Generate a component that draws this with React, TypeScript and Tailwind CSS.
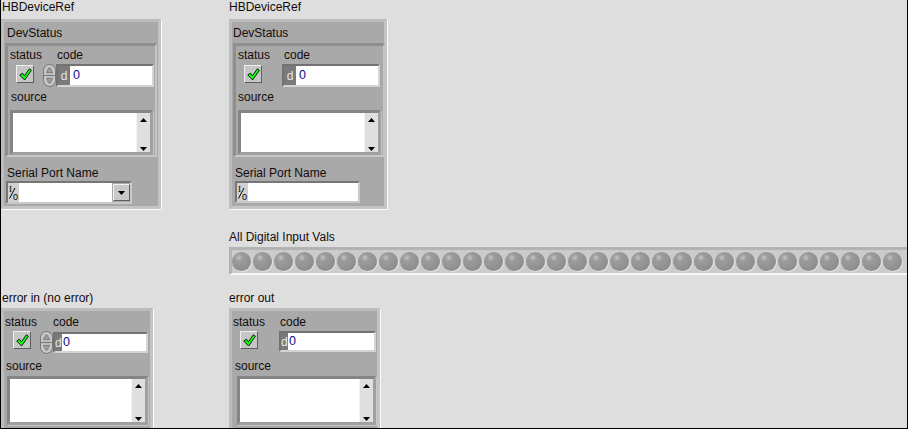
import React from 'react';

const font = "font-['Liberation_Sans',Arial,sans-serif]";

const outer =
  'bg-[#a9a9a9] border-[3px] border-t-[#bcbcbc] border-l-[#bcbcbc] border-r-[#c4c4c4] border-b-[#c4c4c4] shadow-[1px_1px_0_#fbfbfb]';
const inner =
  'bg-[#a9a9a9] border-t-[3px] border-l-[3px] border-r-2 border-b-2 border-t-[#8f8f8f] border-l-[#8f8f8f] border-r-[#c6c6c6] border-b-[#c6c6c6]';

const Label = ({ text, className = '' }: { text: string; className?: string }) => (
  <div className={`text-[12px] leading-[14px] text-[#140c0c] whitespace-nowrap ${className}`}>{text}</div>
);

const CheckButton = ({ className = '' }: { className?: string }) => (
  <div
    className={`w-[18px] h-[18px] bg-[#c6c6c6] border border-t-[#f0f0f0] border-l-[#f0f0f0] border-r-[#5f5f5f] border-b-[#5f5f5f] flex items-center justify-center ${className}`}
  >
    <svg width="13" height="13" viewBox="0 0 13 13">
      <path
        d="M0.8 7 L3.4 5.2 L5.4 7.8 L10.4 0.8 L12.4 2.3 L5.6 12 Z"
        fill="#11ff11"
        stroke="#062006"
        strokeWidth="1"
        strokeLinejoin="round"
      />
    </svg>
  </div>
);

// numeric increment/decrement pill
const Spinner = () => (
  <svg width="13" height="23" viewBox="0 0 13 23" className="shrink-0">
    <rect x="0.5" y="0.5" width="12" height="22" rx="6" fill="#bcbcbc" stroke="#767676" />
    <rect x="2" y="2" width="9" height="19" rx="4.5" fill="none" stroke="#d8d8d8" strokeWidth="0.8" />
    <line x1="1" y1="11.5" x2="12" y2="11.5" stroke="#7c7c7c" />
    <path d="M6.5 3.5 L9.5 8.5 L3.5 8.5 Z" fill="#a0a0a0" stroke="#6c6c6c" strokeWidth="0.7" />
    <path d="M6.5 19.5 L9.5 14.5 L3.5 14.5 Z" fill="#a0a0a0" stroke="#6c6c6c" strokeWidth="0.7" />
  </svg>
);

const Numeric = ({ className, wide }: { className: string; wide: boolean }) => (
  <div
    className={`flex border-2 border-t-[#727272] border-l-[#727272] border-r-[#d4d4d4] border-b-[#d4d4d4] ${className}`}
  >
    <div
      className={`bg-[#7a7a7a] text-[#e8e8e8] text-[12px] flex items-center overflow-hidden ${
        wide ? 'w-[12px] justify-center' : 'w-[7px] pl-[0px]'
      }`}
    >
      d
    </div>
    <div
      className={`flex-1 bg-white flex items-center text-[12.5px] text-[#0b0b8a] ${wide ? 'pl-[3px]' : 'pl-[1px]'}`}
    >
      0
    </div>
  </div>
);

const SourceBox = ({ className }: { className: string }) => (
  <div
    className={`flex bg-white border-[3px] border-t-[#858585] border-l-[#858585] border-r-[#a0a0a0] border-b-[#a0a0a0] shadow-[1px_1px_0_#c8c8c8] ${className}`}
  >
    <div className="flex-1" />
    <div className="w-[14px] bg-[#dfdfdf] border-l border-[#f4f4f4] flex flex-col justify-between items-center pt-[5px] pb-[1px]">
      <svg width="7" height="4" viewBox="0 0 7 4">
        <path d="M3.5 0 L7 4 L0 4 Z" fill="#000" />
      </svg>
      <svg width="7" height="4" viewBox="0 0 7 4">
        <path d="M0 0 L7 0 L3.5 4 Z" fill="#000" />
      </svg>
    </div>
  </div>
);

const IOIcon = () => (
  <svg width="11" height="17" viewBox="0 0 11 17" className="shrink-0">
    <text x="1" y="8" fontSize="9" fontFamily="Liberation Serif, serif" fill="#000">
      I
    </text>
    <line x1="1.5" y1="14.5" x2="7" y2="4" stroke="#000" strokeWidth="1" />
    <text x="5" y="16" fontSize="9" fontFamily="Liberation Sans, sans-serif" fill="#000">
      0
    </text>
  </svg>
);

type BodyProps = {
  rowPad: string;
  statusCol: string;
  statusPl: string;
  btn: string;
  codePl: string;
  spinner: boolean;
  numeric: string;
  wide: boolean;
  sourceLabel: string;
  sourceBox: string;
};

const Body = (p: BodyProps) => (
  <div>
    <div className={`flex ${p.rowPad}`}>
      <div className={p.statusCol}>
        <Label text="status" className={p.statusPl} />
        <CheckButton className={p.btn} />
      </div>
      <div>
        <Label text="code" className={p.codePl} />
        <div className="flex items-center mt-[2px]">
          {p.spinner && <Spinner />}
          <Numeric className={p.numeric} wide={p.wide} />
        </div>
      </div>
    </div>
    <Label text="source" className={p.sourceLabel} />
    <SourceBox className={p.sourceBox} />
  </div>
);

const LedArray = () => (
  <div className="h-[28px] bg-[#cbcbcb] border-t-[3px] border-l-[3px] border-b-2 border-t-[#b3b3b3] border-l-[#b3b3b3] border-b-[#f8f8f8] flex gap-[2px] pt-[2px] overflow-hidden">
    {Array.from({ length: 32 }).map((_, i) => (
      <div
        key={i}
        className="w-[19px] h-[19px] shrink-0 rounded-full bg-[radial-gradient(circle_at_36%_30%,#c4c4c4_0,#9c9c9c_20%,#929292_55%,#878787_100%)] shadow-[1px_1px_0_#e2e2e2]"
      />
    ))}
  </div>
);

export default function App() {
  return (
    <div
      className={`w-[908px] h-[429px] bg-[#dedede] border-l border-r border-b border-black overflow-hidden ${font}`}
    >
      {/* top row: device refs */}
      <div className="flex">
        <div className="w-[228px]">
          <Label text="HBDeviceRef" className="h-[19px] pl-[1px]" />
          <div className={`w-[160px] h-[190px] ${outer}`}>
            <Label text="DevStatus" className="pt-[4px] pl-[3px]" />
            <div className={`mt-[3px] ml-[1px] w-[152px] h-[114px] ${inner}`}>
              <Body
                rowPad="pt-[2px]"
                statusCol="w-[35px]"
                statusPl="pl-[2px]"
                btn="mt-[3px] ml-[8px]"
                codePl="pl-[14px]"
                spinner
                numeric="w-[98px] h-[23px]"
                wide
                sourceLabel="mt-[3px] pl-[3px]"
                sourceBox="mt-[6px] ml-[2px] w-[143px] h-[45px]"
              />
            </div>
            <Label text="Serial Port Name" className="mt-[9px] pl-[3px]" />
            <div className="mt-[1px] ml-[2px] w-[126px] h-[23px] flex items-stretch bg-[#a9a9a9] border-2 border-t-[#767676] border-l-[#767676] border-r-[#c9c9c9] border-b-[#c9c9c9]">
              <div className="w-[11px] bg-[#d0d0d0] flex items-center justify-center">
                <IOIcon />
              </div>
              <div className="w-[94px] bg-white" />
              <div className="ml-[1px] my-auto w-[17px] h-[17px] bg-[#c8c8c8] border border-t-[#f0f0f0] border-l-[#f0f0f0] border-r-[#5f5f5f] border-b-[#5f5f5f] flex items-center justify-center">
                <svg width="7" height="4" viewBox="0 0 7 4">
                  <path d="M0 0 L7 0 L3.5 4 Z" fill="#000" />
                </svg>
              </div>
            </div>
          </div>
        </div>
        <div>
          <Label text="HBDeviceRef" className="h-[19px]" />
          <div className={`w-[158px] h-[190px] ${outer}`}>
            <Label text="DevStatus" className="pt-[4px] pl-[1px]" />
            <div className={`mt-[3px] ml-[1px] w-[152px] h-[114px] ${inner}`}>
              <Body
                rowPad="pt-[2px]"
                statusCol="w-[46px]"
                statusPl="pl-[2px]"
                btn="mt-[3px] ml-[8px]"
                codePl="pl-[2px]"
                spinner={false}
                numeric="w-[98px] h-[23px]"
                wide
                sourceLabel="mt-[3px] pl-[2px]"
                sourceBox="mt-[6px] ml-[2px] w-[143px] h-[45px]"
              />
            </div>
            <Label text="Serial Port Name" className="mt-[9px] pl-[3px]" />
            <div className="mt-[1px] ml-[3px] w-[125px] h-[22px] flex items-stretch border-2 border-t-[#767676] border-l-[#767676] border-r-[#c9c9c9] border-b-[#c9c9c9]">
              <div className="w-[11px] bg-[#d0d0d0] flex items-center justify-center">
                <IOIcon />
              </div>
              <div className="flex-1 bg-white" />
            </div>
          </div>
        </div>
      </div>

      {/* digital inputs */}
      <div className="flex mt-[21px]">
        <div className="w-[228px]" />
        <div className="flex-1 min-w-0">
          <Label text="All Digital Input Vals" className="h-[17px]" />
          <LedArray />
        </div>
      </div>

      {/* error clusters */}
      <div className="flex mt-[16px]">
        <div className="w-[228px]">
          <Label text="error in (no error)" className="h-[17px] pl-[1px]" />
          <div className={`w-[152px] h-[125px] ${outer}`}>
            <Body
              rowPad="pt-[4px]"
              statusCol="w-[36px]"
              statusPl="pl-[1px]"
              btn="mt-[2px] ml-[9px]"
              codePl="pl-[13px]"
              spinner
              numeric="w-[95px] h-[21px]"
              wide={false}
              sourceLabel="mt-[5px] pl-[2px]"
              sourceBox="mt-[3px] ml-[3px] w-[141px] h-[49px]"
            />
          </div>
        </div>
        <div>
          <Label text="error out" className="h-[17px]" />
          <div className={`w-[151px] h-[125px] ${outer}`}>
            <Body
              rowPad="pt-[4px]"
              statusCol="w-[47px]"
              statusPl="pl-[1px]"
              btn="mt-[2px] ml-[8px]"
              codePl="pl-[1px]"
              spinner={false}
              numeric="w-[97px] h-[21px]"
              wide={false}
              sourceLabel="mt-[7px] pl-[3px]"
              sourceBox="mt-[3px] ml-[5px] w-[139px] h-[49px]"
            />
          </div>
        </div>
      </div>
    </div>
  );
}
